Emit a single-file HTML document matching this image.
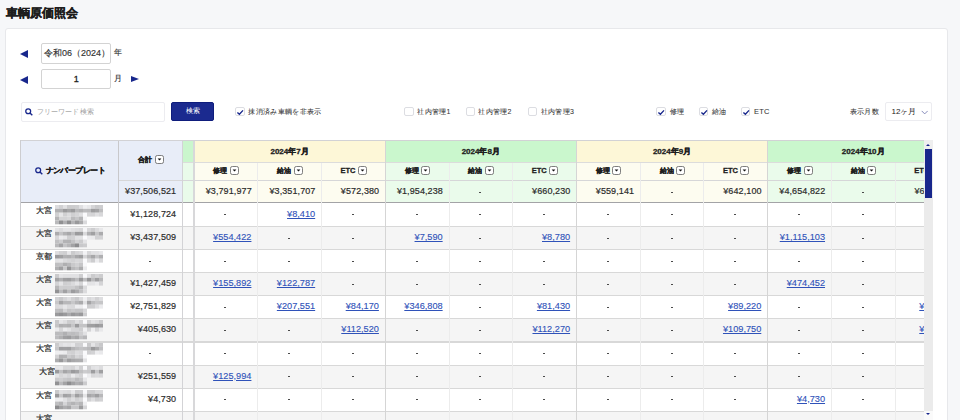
<!DOCTYPE html><html><head><meta charset="utf-8"><style>
*{box-sizing:border-box;margin:0;padding:0}
html,body{width:960px;height:420px;overflow:hidden;background:#f6f7f9;font-family:"Liberation Sans",sans-serif;color:#333}
.ab{position:absolute}
.t{position:absolute;white-space:nowrap;line-height:1}
.tri{position:absolute;width:0;height:0}
.cb{position:absolute;width:9.8px;height:9.4px;border:1px solid #dcdde2;border-radius:2px;background:#fff}
.cb svg{position:absolute;left:0;top:0}
.dd{position:absolute}
.num{position:absolute;white-space:nowrap;line-height:1;font-size:9px;letter-spacing:0.1px;-webkit-text-stroke:0.18px #2a2a2a;color:#2a2a2a}
.lnk{position:absolute;white-space:nowrap;line-height:1;font-size:9.2px;color:#2f52b9;-webkit-text-stroke:0.12px #2f52b9;text-decoration:underline;text-underline-offset:1px}
</style></head><body>
<div id="e1" class="t" style="left:5.50px;top:7.00px;font-size:12px;font-weight:bold;color:#1e1e1e;-webkit-text-stroke:0.35px #1e1e1e">車輌原価照会</div>
<div class="ab" style="left:5px;top:27.6px;width:943px;height:420px;background:#fff;border:1px solid #e7e8eb;border-radius:3px"></div>
<div class="tri" style="left:20.3px;top:49.6px;border-top:4.0px solid transparent;border-bottom:4.0px solid transparent;border-right:8.3px solid #18278c"></div>
<div class="tri" style="left:20.3px;top:76px;border-top:4.0px solid transparent;border-bottom:4.0px solid transparent;border-right:8.3px solid #18278c"></div>
<div class="tri" style="left:131px;top:75.7px;border-top:3.75px solid transparent;border-bottom:3.75px solid transparent;border-left:8px solid #18278c"></div>
<div class="ab" style="left:41px;top:43px;width:70px;height:20.5px;border:1px solid #d3d3d3;border-radius:2px;background:#fff"></div>
<div id="e2" class="t" style="left:44.00px;top:49.00px;font-size:9px;color:#333;-webkit-text-stroke:0.15px #333">令和06（2024）</div>
<div id="e3" class="t" style="left:113.60px;top:48.80px;font-size:8px;color:#333;-webkit-text-stroke:0.15px #333">年</div>
<div class="ab" style="left:41px;top:69.3px;width:70px;height:20px;border:1px solid #d3d3d3;border-radius:2px;background:#fff"></div>
<div id="e4" class="t" style="left:73.70px;top:75.00px;font-size:9px;color:#222;-webkit-text-stroke:0.3px #222">1</div>
<div id="e5" class="t" style="left:113.60px;top:75.30px;font-size:8px;color:#333;-webkit-text-stroke:0.15px #333">月</div>
<div class="ab" style="left:20.5px;top:101.5px;width:144px;height:20px;border:1px solid #ececf0;border-radius:2px;background:#fff"></div>
<svg class="ab" style="left:24.80px;top:107.80px" width="8" height="8" viewBox="0 0 8 8"><circle cx="3.2" cy="3.2" r="2.45" fill="none" stroke="#18278c" stroke-width="1.25"/><line x1="5" y1="5" x2="7.3" y2="7.3" stroke="#18278c" stroke-width="1.4"/></svg>
<div id="e6" class="t" style="left:37.00px;top:107.50px;font-size:7px;color:#a3a3a3;letter-spacing:0.1px">フリーワード検索</div>
<div class="ab" style="left:171px;top:101.8px;width:42.8px;height:19.7px;background:#1b2a8f;border:1px solid #0f1d7c;border-radius:2px"></div>
<div id="e7" class="t" style="left:186.40px;top:107.50px;font-size:6.5px;color:#fff">検索</div>
<div class="cb" style="left:235.4px;top:107.1px"><svg width="10" height="10" viewBox="0 0 10 10" style="left:-1px;top:-1px"><polyline points="2.4,5.4 4.4,7.3 8.0,3.4" fill="none" stroke="#18278c" stroke-width="1.35"/></svg></div>
<div id="e8" class="t" style="left:248.20px;top:107.50px;font-size:7px;color:#333;-webkit-text-stroke:0.05px #333;letter-spacing:0.35px">抹消済み車輌を非表示</div>
<div class="cb" style="left:403.9px;top:107.1px"></div>
<div id="e9" class="t" style="left:417.30px;top:107.50px;font-size:7px;color:#333;-webkit-text-stroke:0.05px #333;letter-spacing:0.3px">社内管理1</div>
<div class="cb" style="left:465.7px;top:107.1px"></div>
<div id="e10" class="t" style="left:478.40px;top:107.50px;font-size:7px;color:#333;-webkit-text-stroke:0.05px #333;letter-spacing:0.3px">社内管理2</div>
<div class="cb" style="left:527.5px;top:107.1px"></div>
<div id="e11" class="t" style="left:540.70px;top:107.50px;font-size:7px;color:#333;-webkit-text-stroke:0.05px #333;letter-spacing:0.3px">社内管理3</div>
<div class="cb" style="left:656.4px;top:107.1px"><svg width="10" height="10" viewBox="0 0 10 10" style="left:-1px;top:-1px"><polyline points="2.4,5.4 4.4,7.3 8.0,3.4" fill="none" stroke="#18278c" stroke-width="1.35"/></svg></div>
<div id="e12" class="t" style="left:670.00px;top:107.50px;font-size:7px;color:#333;-webkit-text-stroke:0.05px #333">修理</div>
<div class="cb" style="left:698.5px;top:107.1px"><svg width="10" height="10" viewBox="0 0 10 10" style="left:-1px;top:-1px"><polyline points="2.4,5.4 4.4,7.3 8.0,3.4" fill="none" stroke="#18278c" stroke-width="1.35"/></svg></div>
<div id="e13" class="t" style="left:711.70px;top:107.50px;font-size:7px;color:#333;-webkit-text-stroke:0.05px #333">給油</div>
<div class="cb" style="left:740.6px;top:107.1px"><svg width="10" height="10" viewBox="0 0 10 10" style="left:-1px;top:-1px"><polyline points="2.4,5.4 4.4,7.3 8.0,3.4" fill="none" stroke="#18278c" stroke-width="1.35"/></svg></div>
<div id="e14" class="t" style="left:754.00px;top:107.50px;font-size:7px;color:#333;-webkit-text-stroke:0.05px #333;font-size:7.5px;letter-spacing:0.2px">ETC</div>
<div id="e15" class="t" style="left:849.90px;top:107.50px;font-size:7px;color:#333;-webkit-text-stroke:0.05px #333;letter-spacing:0.3px">表示月数</div>
<div class="ab" style="left:885.4px;top:101.7px;width:47px;height:19.5px;border:1px solid #ececf0;border-radius:2px;background:#fff"></div>
<div id="e16" class="t" style="left:891.50px;top:107.50px;font-size:8px;color:#222">12ヶ月</div>
<svg class="ab" style="left:920.5px;top:110px" width="7.5" height="5" viewBox="0 0 7.5 5"><polyline points="0.7,0.9 3.7,3.9 6.7,0.9" fill="none" stroke="#7a80b4" stroke-width="0.9"/></svg>
<div class="ab" style="left:0;top:0;width:923.8px;height:420px;overflow:hidden">
<div class="ab" style="left:20.50px;top:139.50px;width:161.90px;height:63.80px;background:#e8edf8"></div>
<div class="ab" style="left:182.40px;top:141.00px;width:11.60px;height:21.80px;background:#caf6cd"></div>
<div class="ab" style="left:182.40px;top:162.80px;width:11.60px;height:39.40px;background:#e9fbea"></div>
<div class="ab" style="left:194.00px;top:141.00px;width:191.20px;height:21.80px;background:#fdf7d7"></div>
<div class="ab" style="left:194.00px;top:162.80px;width:191.20px;height:39.40px;background:#fdfcf0"></div>
<div class="ab" style="left:385.20px;top:141.00px;width:191.20px;height:21.80px;background:#caf7cd"></div>
<div class="ab" style="left:385.20px;top:162.80px;width:191.20px;height:39.40px;background:#eafbeb"></div>
<div class="ab" style="left:576.40px;top:141.00px;width:191.20px;height:21.80px;background:#fdf7d7"></div>
<div class="ab" style="left:576.40px;top:162.80px;width:191.20px;height:39.40px;background:#fdfcf0"></div>
<div class="ab" style="left:767.60px;top:141.00px;width:191.20px;height:21.80px;background:#caf7cd"></div>
<div class="ab" style="left:767.60px;top:162.80px;width:191.20px;height:39.40px;background:#eafbeb"></div>
<div class="ab" style="left:20.50px;top:203.30px;width:903.30px;height:23.12px;background:#ffffff"></div>
<div class="ab" style="left:20.50px;top:226.42px;width:903.30px;height:23.12px;background:#f5f5f5"></div>
<div class="ab" style="left:20.50px;top:249.54px;width:903.30px;height:23.12px;background:#ffffff"></div>
<div class="ab" style="left:20.50px;top:272.66px;width:903.30px;height:23.12px;background:#f5f5f5"></div>
<div class="ab" style="left:20.50px;top:295.78px;width:903.30px;height:23.12px;background:#ffffff"></div>
<div class="ab" style="left:20.50px;top:318.90px;width:903.30px;height:23.12px;background:#f5f5f5"></div>
<div class="ab" style="left:20.50px;top:342.02px;width:903.30px;height:23.12px;background:#ffffff"></div>
<div class="ab" style="left:20.50px;top:365.14px;width:903.30px;height:23.12px;background:#f5f5f5"></div>
<div class="ab" style="left:20.50px;top:388.26px;width:903.30px;height:23.12px;background:#ffffff"></div>
<div class="ab" style="left:20.50px;top:411.38px;width:903.30px;height:23.12px;background:#f5f5f5"></div>
<div class="ab" style="left:20.00px;top:139.50px;width:903.80px;height:1.40px;background:#d2d2d5"></div>
<div class="ab" style="left:20.00px;top:139.50px;width:1.30px;height:280.50px;background:#cdcdd0"></div>
<div class="ab" style="left:20.50px;top:202.20px;width:903.30px;height:1.30px;background:#a3a3a6"></div>
<div class="ab" style="left:182.40px;top:162.10px;width:741.40px;height:1.40px;background:#dcdcdc"></div>
<div class="ab" style="left:118.50px;top:179.80px;width:805.30px;height:1.20px;background:#d6d6d8"></div>
<div class="ab" style="left:20.50px;top:225.82px;width:903.30px;height:1.10px;background:#d8d8d8"></div>
<div class="ab" style="left:20.50px;top:248.94px;width:903.30px;height:1.10px;background:#d8d8d8"></div>
<div class="ab" style="left:20.50px;top:272.06px;width:903.30px;height:1.10px;background:#d8d8d8"></div>
<div class="ab" style="left:20.50px;top:295.18px;width:903.30px;height:1.10px;background:#d8d8d8"></div>
<div class="ab" style="left:20.50px;top:318.30px;width:903.30px;height:1.10px;background:#d8d8d8"></div>
<div class="ab" style="left:20.50px;top:341.42px;width:903.30px;height:1.10px;background:#d8d8d8"></div>
<div class="ab" style="left:20.50px;top:364.54px;width:903.30px;height:1.10px;background:#d8d8d8"></div>
<div class="ab" style="left:20.50px;top:387.66px;width:903.30px;height:1.10px;background:#d8d8d8"></div>
<div class="ab" style="left:20.50px;top:410.78px;width:903.30px;height:1.10px;background:#d8d8d8"></div>
<div class="ab" style="left:117.95px;top:141.00px;width:1.10px;height:279.00px;background:#c8c8cb"></div>
<div class="ab" style="left:181.85px;top:141.00px;width:1.10px;height:279.00px;background:#d3d3d6"></div>
<div class="ab" style="left:193.45px;top:141.00px;width:1.10px;height:279.00px;background:#d8d8da"></div>
<div class="ab" style="left:384.60px;top:141.00px;width:1.20px;height:279.00px;background:#d5d5d5"></div>
<div class="ab" style="left:575.80px;top:141.00px;width:1.20px;height:279.00px;background:#d5d5d5"></div>
<div class="ab" style="left:767.00px;top:141.00px;width:1.20px;height:279.00px;background:#d5d5d5"></div>
<div class="ab" style="left:958.20px;top:141.00px;width:1.20px;height:279.00px;background:#d5d5d5"></div>
<div class="ab" style="left:257.33px;top:162.80px;width:0.80px;height:257.20px;background:#ececec"></div>
<div class="ab" style="left:321.07px;top:162.80px;width:0.80px;height:257.20px;background:#ececec"></div>
<div class="ab" style="left:448.53px;top:162.80px;width:0.80px;height:257.20px;background:#ececec"></div>
<div class="ab" style="left:512.27px;top:162.80px;width:0.80px;height:257.20px;background:#ececec"></div>
<div class="ab" style="left:639.73px;top:162.80px;width:0.80px;height:257.20px;background:#ececec"></div>
<div class="ab" style="left:703.47px;top:162.80px;width:0.80px;height:257.20px;background:#ececec"></div>
<div class="ab" style="left:830.93px;top:162.80px;width:0.80px;height:257.20px;background:#ececec"></div>
<div class="ab" style="left:894.67px;top:162.80px;width:0.80px;height:257.20px;background:#ececec"></div>
<svg class="ab" style="left:34.50px;top:166.90px" width="8" height="8" viewBox="0 0 8 8"><circle cx="3.2" cy="3.2" r="2.45" fill="none" stroke="#18278c" stroke-width="1.25"/><line x1="5" y1="5" x2="7.3" y2="7.3" stroke="#18278c" stroke-width="1.4"/></svg>
<div id="e17" class="t" style="left:45.50px;top:166.50px;font-size:8px;letter-spacing:-0.55px;font-weight:bold;color:#1e1e1e;-webkit-text-stroke:0.3px #1e1e1e">ナンバープレート</div>
<div id="e18" class="t" style="left:137.90px;top:155.90px;font-size:7px;font-weight:bold;color:#1e1e1e;-webkit-text-stroke:0.3px #1e1e1e">合計</div>
<svg class="dd" style="left:155.00px;top:155.20px" width="9" height="9" viewBox="0 0 9 9"><rect x="0.5" y="0.5" width="8" height="8" rx="1.8" fill="#fff" stroke="#707070" stroke-width="0.9"/><polygon points="2.6,3.4 6.4,3.4 4.5,5.6" fill="#111"/></svg>
<div id="e19" class="num" style="right:747.60px;top:186.60px;">¥37,506,521</div>
<div id="e20" class="t" style="left:189.60px;width:200px;text-align:center;top:148.00px;font-size:8px;font-weight:bold;color:#1e1e1e;-webkit-text-stroke:0.3px #1e1e1e">2024年7月</div>
<div id="e21" class="num" style="right:672.07px;top:186.60px;">¥3,791,977</div>
<div id="e22" class="t" style="left:213.37px;top:166.70px;font-size:7px;font-weight:bold;color:#1e1e1e;-webkit-text-stroke:0.2px #1e1e1e">修理</div>
<svg class="dd" style="left:230.07px;top:166.30px" width="9" height="9" viewBox="0 0 9 9"><rect x="0.5" y="0.5" width="8" height="8" rx="1.8" fill="#fff" stroke="#707070" stroke-width="0.9"/><polygon points="2.6,3.4 6.4,3.4 4.5,5.6" fill="#111"/></svg>
<div id="e23" class="num" style="right:608.33px;top:186.60px;">¥3,351,707</div>
<div id="e24" class="t" style="left:277.10px;top:166.70px;font-size:7px;font-weight:bold;color:#1e1e1e;-webkit-text-stroke:0.2px #1e1e1e">給油</div>
<svg class="dd" style="left:293.80px;top:166.30px" width="9" height="9" viewBox="0 0 9 9"><rect x="0.5" y="0.5" width="8" height="8" rx="1.8" fill="#fff" stroke="#707070" stroke-width="0.9"/><polygon points="2.6,3.4 6.4,3.4 4.5,5.6" fill="#111"/></svg>
<div id="e25" class="num" style="right:544.60px;top:186.60px;">¥572,380</div>
<div id="e26" class="t" style="left:340.53px;top:166.80px;font-size:7.5px;font-weight:bold;color:#1e1e1e;-webkit-text-stroke:0.3px #1e1e1e">ETC</div>
<svg class="dd" style="left:357.53px;top:166.30px" width="9" height="9" viewBox="0 0 9 9"><rect x="0.5" y="0.5" width="8" height="8" rx="1.8" fill="#fff" stroke="#707070" stroke-width="0.9"/><polygon points="2.6,3.4 6.4,3.4 4.5,5.6" fill="#111"/></svg>
<div id="e27" class="t" style="left:380.80px;width:200px;text-align:center;top:148.00px;font-size:8px;font-weight:bold;color:#1e1e1e;-webkit-text-stroke:0.3px #1e1e1e">2024年8月</div>
<div id="e28" class="num" style="right:480.87px;top:186.60px;">¥1,954,238</div>
<div id="e29" class="t" style="left:404.57px;top:166.70px;font-size:7px;font-weight:bold;color:#1e1e1e;-webkit-text-stroke:0.2px #1e1e1e">修理</div>
<svg class="dd" style="left:421.27px;top:166.30px" width="9" height="9" viewBox="0 0 9 9"><rect x="0.5" y="0.5" width="8" height="8" rx="1.8" fill="#fff" stroke="#707070" stroke-width="0.9"/><polygon points="2.6,3.4 6.4,3.4 4.5,5.6" fill="#111"/></svg>
<div class="ab" style="left:478.70px;top:191.50px;width:2.60px;height:1.10px;background:#4a4a4a"></div>
<div id="e30" class="t" style="left:468.30px;top:166.70px;font-size:7px;font-weight:bold;color:#1e1e1e;-webkit-text-stroke:0.2px #1e1e1e">給油</div>
<svg class="dd" style="left:485.00px;top:166.30px" width="9" height="9" viewBox="0 0 9 9"><rect x="0.5" y="0.5" width="8" height="8" rx="1.8" fill="#fff" stroke="#707070" stroke-width="0.9"/><polygon points="2.6,3.4 6.4,3.4 4.5,5.6" fill="#111"/></svg>
<div id="e31" class="num" style="right:353.40px;top:186.60px;">¥660,230</div>
<div id="e32" class="t" style="left:531.73px;top:166.80px;font-size:7.5px;font-weight:bold;color:#1e1e1e;-webkit-text-stroke:0.3px #1e1e1e">ETC</div>
<svg class="dd" style="left:548.73px;top:166.30px" width="9" height="9" viewBox="0 0 9 9"><rect x="0.5" y="0.5" width="8" height="8" rx="1.8" fill="#fff" stroke="#707070" stroke-width="0.9"/><polygon points="2.6,3.4 6.4,3.4 4.5,5.6" fill="#111"/></svg>
<div id="e33" class="t" style="left:572.00px;width:200px;text-align:center;top:148.00px;font-size:8px;font-weight:bold;color:#1e1e1e;-webkit-text-stroke:0.3px #1e1e1e">2024年9月</div>
<div id="e34" class="num" style="right:289.67px;top:186.60px;">¥559,141</div>
<div id="e35" class="t" style="left:595.77px;top:166.70px;font-size:7px;font-weight:bold;color:#1e1e1e;-webkit-text-stroke:0.2px #1e1e1e">修理</div>
<svg class="dd" style="left:612.47px;top:166.30px" width="9" height="9" viewBox="0 0 9 9"><rect x="0.5" y="0.5" width="8" height="8" rx="1.8" fill="#fff" stroke="#707070" stroke-width="0.9"/><polygon points="2.6,3.4 6.4,3.4 4.5,5.6" fill="#111"/></svg>
<div class="ab" style="left:670.70px;top:191.50px;width:2.60px;height:1.10px;background:#4a4a4a"></div>
<div id="e36" class="t" style="left:659.50px;top:166.70px;font-size:7px;font-weight:bold;color:#1e1e1e;-webkit-text-stroke:0.2px #1e1e1e">給油</div>
<svg class="dd" style="left:676.20px;top:166.30px" width="9" height="9" viewBox="0 0 9 9"><rect x="0.5" y="0.5" width="8" height="8" rx="1.8" fill="#fff" stroke="#707070" stroke-width="0.9"/><polygon points="2.6,3.4 6.4,3.4 4.5,5.6" fill="#111"/></svg>
<div id="e37" class="num" style="right:162.20px;top:186.60px;">¥642,100</div>
<div id="e38" class="t" style="left:722.93px;top:166.80px;font-size:7.5px;font-weight:bold;color:#1e1e1e;-webkit-text-stroke:0.3px #1e1e1e">ETC</div>
<svg class="dd" style="left:739.93px;top:166.30px" width="9" height="9" viewBox="0 0 9 9"><rect x="0.5" y="0.5" width="8" height="8" rx="1.8" fill="#fff" stroke="#707070" stroke-width="0.9"/><polygon points="2.6,3.4 6.4,3.4 4.5,5.6" fill="#111"/></svg>
<div id="e39" class="t" style="left:763.20px;width:200px;text-align:center;top:148.00px;font-size:8px;font-weight:bold;color:#1e1e1e;-webkit-text-stroke:0.3px #1e1e1e">2024年10月</div>
<div id="e40" class="num" style="right:98.47px;top:186.60px;">¥4,654,822</div>
<div id="e41" class="t" style="left:786.97px;top:166.70px;font-size:7px;font-weight:bold;color:#1e1e1e;-webkit-text-stroke:0.2px #1e1e1e">修理</div>
<svg class="dd" style="left:803.67px;top:166.30px" width="9" height="9" viewBox="0 0 9 9"><rect x="0.5" y="0.5" width="8" height="8" rx="1.8" fill="#fff" stroke="#707070" stroke-width="0.9"/><polygon points="2.6,3.4 6.4,3.4 4.5,5.6" fill="#111"/></svg>
<div class="ab" style="left:861.70px;top:191.50px;width:2.60px;height:1.10px;background:#4a4a4a"></div>
<div id="e42" class="t" style="left:850.70px;top:166.70px;font-size:7px;font-weight:bold;color:#1e1e1e;-webkit-text-stroke:0.2px #1e1e1e">給油</div>
<svg class="dd" style="left:867.40px;top:166.30px" width="9" height="9" viewBox="0 0 9 9"><rect x="0.5" y="0.5" width="8" height="8" rx="1.8" fill="#fff" stroke="#707070" stroke-width="0.9"/><polygon points="2.6,3.4 6.4,3.4 4.5,5.6" fill="#111"/></svg>
<div id="e43" class="num" style="right:-29.00px;top:186.60px;">¥654,321</div>
<div id="e44" class="t" style="left:914.13px;top:166.80px;font-size:7.5px;font-weight:bold;color:#1e1e1e;-webkit-text-stroke:0.3px #1e1e1e">ETC</div>
<svg class="dd" style="left:931.13px;top:166.30px" width="9" height="9" viewBox="0 0 9 9"><rect x="0.5" y="0.5" width="8" height="8" rx="1.8" fill="#fff" stroke="#707070" stroke-width="0.9"/><polygon points="2.6,3.4 6.4,3.4 4.5,5.6" fill="#111"/></svg>
<div id="e45" class="t" style="left:35.70px;top:206.60px;font-size:8px;color:#262626;-webkit-text-stroke:0.2px #262626">大宮</div>
<svg class="ab" style="left:55.30px;top:204.60px" width="50" height="21" viewBox="0 0 50 21"><rect x="0" y="0.00" width="4" height="3.9" fill="rgb(220,220,222)"/><rect x="4" y="0.00" width="4" height="3.9" fill="rgb(209,209,211)"/><rect x="8" y="0.00" width="4" height="3.9" fill="rgb(225,225,227)"/><rect x="12" y="0.00" width="4" height="3.9" fill="rgb(203,203,205)"/><rect x="16" y="0.00" width="4" height="3.9" fill="rgb(204,204,206)"/><rect x="20" y="0.00" width="4" height="3.9" fill="rgb(206,206,208)"/><rect x="24" y="0.00" width="4" height="3.9" fill="rgb(223,223,225)"/><rect x="28" y="0.00" width="4" height="3.9" fill="rgb(238,238,240)"/><rect x="32" y="0.00" width="4" height="3.9" fill="rgb(232,232,234)"/><rect x="36" y="0.00" width="4" height="3.9" fill="rgb(213,213,215)"/><rect x="40" y="0.00" width="4" height="3.9" fill="rgb(202,202,204)"/><rect x="44" y="0.00" width="4" height="3.9" fill="rgb(205,205,207)"/><rect x="0" y="3.85" width="4" height="3.9" fill="rgb(177,177,179)"/><rect x="4" y="3.85" width="4" height="3.9" fill="rgb(176,176,178)"/><rect x="8" y="3.85" width="4" height="3.9" fill="rgb(154,154,156)"/><rect x="12" y="3.85" width="4" height="3.9" fill="rgb(165,165,167)"/><rect x="16" y="3.85" width="4" height="3.9" fill="rgb(155,155,157)"/><rect x="20" y="3.85" width="4" height="3.9" fill="rgb(185,185,187)"/><rect x="24" y="3.85" width="4" height="3.9" fill="rgb(177,177,179)"/><rect x="28" y="3.85" width="4" height="3.9" fill="rgb(188,188,190)"/><rect x="32" y="3.85" width="4" height="3.9" fill="rgb(186,186,188)"/><rect x="36" y="3.85" width="4" height="3.9" fill="rgb(157,157,159)"/><rect x="40" y="3.85" width="4" height="3.9" fill="rgb(164,164,166)"/><rect x="44" y="3.85" width="4" height="3.9" fill="rgb(190,190,192)"/><rect x="0" y="7.70" width="4" height="3.9" fill="rgb(208,208,210)"/><rect x="4" y="7.70" width="4" height="3.9" fill="rgb(230,230,232)"/><rect x="8" y="7.70" width="4" height="3.9" fill="rgb(208,208,210)"/><rect x="12" y="7.70" width="4" height="3.9" fill="rgb(219,219,221)"/><rect x="16" y="7.70" width="4" height="3.9" fill="rgb(207,207,209)"/><rect x="20" y="7.70" width="4" height="3.9" fill="rgb(213,213,215)"/><rect x="24" y="7.70" width="4" height="3.9" fill="rgb(223,223,225)"/><rect x="28" y="7.70" width="4" height="3.9" fill="rgb(250,250,252)"/><rect x="32" y="7.70" width="4" height="3.9" fill="rgb(214,214,216)"/><rect x="36" y="7.70" width="4" height="3.9" fill="rgb(212,212,214)"/><rect x="40" y="7.70" width="4" height="3.9" fill="rgb(224,224,226)"/><rect x="44" y="7.70" width="4" height="3.9" fill="rgb(216,216,218)"/><rect x="0" y="11.55" width="4" height="3.9" fill="rgb(181,181,183)"/><rect x="4" y="11.55" width="4" height="3.9" fill="rgb(212,212,214)"/><rect x="8" y="11.55" width="4" height="3.9" fill="rgb(211,211,213)"/><rect x="12" y="11.55" width="4" height="3.9" fill="rgb(215,215,217)"/><rect x="16" y="11.55" width="4" height="3.9" fill="rgb(187,187,189)"/><rect x="20" y="11.55" width="4" height="3.9" fill="rgb(198,198,200)"/><rect x="24" y="11.55" width="4" height="3.9" fill="rgb(181,181,183)"/><rect x="28" y="11.55" width="4" height="3.9" fill="rgb(245,245,247)"/><rect x="0" y="15.40" width="4" height="3.9" fill="rgb(185,185,187)"/><rect x="4" y="15.40" width="4" height="3.9" fill="rgb(144,144,146)"/><rect x="8" y="15.40" width="4" height="3.9" fill="rgb(176,176,178)"/><rect x="12" y="15.40" width="4" height="3.9" fill="rgb(143,143,145)"/><rect x="16" y="15.40" width="4" height="3.9" fill="rgb(179,179,181)"/><rect x="20" y="15.40" width="4" height="3.9" fill="rgb(153,153,155)"/><rect x="24" y="15.40" width="4" height="3.9" fill="rgb(171,171,173)"/><rect x="28" y="15.40" width="4" height="3.9" fill="rgb(218,218,220)"/></svg>
<div id="e46" class="num" style="right:747.60px;top:209.80px;">¥1,128,724</div>
<div class="ab" style="left:223.70px;top:213.50px;width:2.60px;height:1.10px;background:#4a4a4a"></div>
<div id="e47" class="lnk" style="right:608.63px;top:209.70px;">¥8,410</div>
<div class="ab" style="left:351.70px;top:213.50px;width:2.60px;height:1.10px;background:#4a4a4a"></div>
<div class="ab" style="left:415.70px;top:213.50px;width:2.60px;height:1.10px;background:#4a4a4a"></div>
<div class="ab" style="left:478.70px;top:213.50px;width:2.60px;height:1.10px;background:#4a4a4a"></div>
<div class="ab" style="left:542.70px;top:213.50px;width:2.60px;height:1.10px;background:#4a4a4a"></div>
<div class="ab" style="left:606.70px;top:213.50px;width:2.60px;height:1.10px;background:#4a4a4a"></div>
<div class="ab" style="left:670.70px;top:213.50px;width:2.60px;height:1.10px;background:#4a4a4a"></div>
<div class="ab" style="left:733.70px;top:213.50px;width:2.60px;height:1.10px;background:#4a4a4a"></div>
<div class="ab" style="left:797.70px;top:213.50px;width:2.60px;height:1.10px;background:#4a4a4a"></div>
<div class="ab" style="left:861.70px;top:213.50px;width:2.60px;height:1.10px;background:#4a4a4a"></div>
<div id="e48" class="t" style="left:35.70px;top:229.72px;font-size:8px;color:#262626;-webkit-text-stroke:0.2px #262626">大宮</div>
<svg class="ab" style="left:55.30px;top:227.72px" width="50" height="21" viewBox="0 0 50 21"><rect x="0" y="0.00" width="4" height="3.9" fill="rgb(227,227,229)"/><rect x="4" y="0.00" width="4" height="3.9" fill="rgb(220,220,222)"/><rect x="8" y="0.00" width="4" height="3.9" fill="rgb(229,229,231)"/><rect x="12" y="0.00" width="4" height="3.9" fill="rgb(229,229,231)"/><rect x="16" y="0.00" width="4" height="3.9" fill="rgb(223,223,225)"/><rect x="20" y="0.00" width="4" height="3.9" fill="rgb(219,219,221)"/><rect x="24" y="0.00" width="4" height="3.9" fill="rgb(215,215,217)"/><rect x="28" y="0.00" width="4" height="3.9" fill="rgb(246,246,248)"/><rect x="32" y="0.00" width="4" height="3.9" fill="rgb(215,215,217)"/><rect x="36" y="0.00" width="4" height="3.9" fill="rgb(205,205,207)"/><rect x="40" y="0.00" width="4" height="3.9" fill="rgb(219,219,221)"/><rect x="44" y="0.00" width="4" height="3.9" fill="rgb(231,231,233)"/><rect x="0" y="3.85" width="4" height="3.9" fill="rgb(171,171,173)"/><rect x="4" y="3.85" width="4" height="3.9" fill="rgb(196,196,198)"/><rect x="8" y="3.85" width="4" height="3.9" fill="rgb(178,178,180)"/><rect x="12" y="3.85" width="4" height="3.9" fill="rgb(168,168,170)"/><rect x="16" y="3.85" width="4" height="3.9" fill="rgb(188,188,190)"/><rect x="20" y="3.85" width="4" height="3.9" fill="rgb(154,154,156)"/><rect x="24" y="3.85" width="4" height="3.9" fill="rgb(157,157,159)"/><rect x="28" y="3.85" width="4" height="3.9" fill="rgb(217,217,219)"/><rect x="32" y="3.85" width="4" height="3.9" fill="rgb(176,176,178)"/><rect x="36" y="3.85" width="4" height="3.9" fill="rgb(160,160,162)"/><rect x="40" y="3.85" width="4" height="3.9" fill="rgb(198,198,200)"/><rect x="44" y="3.85" width="4" height="3.9" fill="rgb(171,171,173)"/><rect x="0" y="7.70" width="4" height="3.9" fill="rgb(214,214,216)"/><rect x="4" y="7.70" width="4" height="3.9" fill="rgb(236,236,238)"/><rect x="8" y="7.70" width="4" height="3.9" fill="rgb(231,231,233)"/><rect x="12" y="7.70" width="4" height="3.9" fill="rgb(207,207,209)"/><rect x="16" y="7.70" width="4" height="3.9" fill="rgb(209,209,211)"/><rect x="20" y="7.70" width="4" height="3.9" fill="rgb(225,225,227)"/><rect x="24" y="7.70" width="4" height="3.9" fill="rgb(226,226,228)"/><rect x="28" y="7.70" width="4" height="3.9" fill="rgb(250,250,252)"/><rect x="32" y="7.70" width="4" height="3.9" fill="rgb(236,236,238)"/><rect x="36" y="7.70" width="4" height="3.9" fill="rgb(234,234,236)"/><rect x="40" y="7.70" width="4" height="3.9" fill="rgb(209,209,211)"/><rect x="44" y="7.70" width="4" height="3.9" fill="rgb(210,210,212)"/><rect x="0" y="11.55" width="4" height="3.9" fill="rgb(192,192,194)"/><rect x="4" y="11.55" width="4" height="3.9" fill="rgb(205,205,207)"/><rect x="8" y="11.55" width="4" height="3.9" fill="rgb(179,179,181)"/><rect x="12" y="11.55" width="4" height="3.9" fill="rgb(178,178,180)"/><rect x="16" y="11.55" width="4" height="3.9" fill="rgb(194,194,196)"/><rect x="20" y="11.55" width="4" height="3.9" fill="rgb(211,211,213)"/><rect x="24" y="11.55" width="4" height="3.9" fill="rgb(203,203,205)"/><rect x="28" y="11.55" width="4" height="3.9" fill="rgb(228,228,230)"/><rect x="0" y="15.40" width="4" height="3.9" fill="rgb(185,185,187)"/><rect x="4" y="15.40" width="4" height="3.9" fill="rgb(164,164,166)"/><rect x="8" y="15.40" width="4" height="3.9" fill="rgb(196,196,198)"/><rect x="12" y="15.40" width="4" height="3.9" fill="rgb(182,182,184)"/><rect x="16" y="15.40" width="4" height="3.9" fill="rgb(162,162,164)"/><rect x="20" y="15.40" width="4" height="3.9" fill="rgb(141,141,143)"/><rect x="24" y="15.40" width="4" height="3.9" fill="rgb(200,200,202)"/><rect x="28" y="15.40" width="4" height="3.9" fill="rgb(204,204,206)"/></svg>
<div id="e49" class="num" style="right:747.60px;top:232.92px;">¥3,437,509</div>
<div id="e50" class="lnk" style="right:672.37px;top:232.82px;">¥554,422</div>
<div class="ab" style="left:287.70px;top:237.50px;width:2.60px;height:1.10px;background:#4a4a4a"></div>
<div class="ab" style="left:351.70px;top:237.50px;width:2.60px;height:1.10px;background:#4a4a4a"></div>
<div id="e51" class="lnk" style="right:481.17px;top:232.82px;">¥7,590</div>
<div class="ab" style="left:478.70px;top:237.50px;width:2.60px;height:1.10px;background:#4a4a4a"></div>
<div id="e52" class="lnk" style="right:353.70px;top:232.82px;">¥8,780</div>
<div class="ab" style="left:606.70px;top:237.50px;width:2.60px;height:1.10px;background:#4a4a4a"></div>
<div class="ab" style="left:670.70px;top:237.50px;width:2.60px;height:1.10px;background:#4a4a4a"></div>
<div class="ab" style="left:733.70px;top:237.50px;width:2.60px;height:1.10px;background:#4a4a4a"></div>
<div id="e53" class="lnk" style="right:98.77px;top:232.82px;">¥1,115,103</div>
<div class="ab" style="left:861.70px;top:237.50px;width:2.60px;height:1.10px;background:#4a4a4a"></div>
<div id="e54" class="t" style="left:35.70px;top:252.84px;font-size:8px;color:#262626;-webkit-text-stroke:0.2px #262626">京都</div>
<svg class="ab" style="left:55.30px;top:250.84px" width="50" height="21" viewBox="0 0 50 21"><rect x="0" y="0.00" width="4" height="3.9" fill="rgb(222,222,224)"/><rect x="4" y="0.00" width="4" height="3.9" fill="rgb(210,210,212)"/><rect x="8" y="0.00" width="4" height="3.9" fill="rgb(207,207,209)"/><rect x="12" y="0.00" width="4" height="3.9" fill="rgb(231,231,233)"/><rect x="16" y="0.00" width="4" height="3.9" fill="rgb(203,203,205)"/><rect x="20" y="0.00" width="4" height="3.9" fill="rgb(213,213,215)"/><rect x="24" y="0.00" width="4" height="3.9" fill="rgb(218,218,220)"/><rect x="28" y="0.00" width="4" height="3.9" fill="rgb(243,243,245)"/><rect x="32" y="0.00" width="4" height="3.9" fill="rgb(215,215,217)"/><rect x="36" y="0.00" width="4" height="3.9" fill="rgb(225,225,227)"/><rect x="40" y="0.00" width="4" height="3.9" fill="rgb(225,225,227)"/><rect x="44" y="0.00" width="4" height="3.9" fill="rgb(231,231,233)"/><rect x="0" y="3.85" width="4" height="3.9" fill="rgb(155,155,157)"/><rect x="4" y="3.85" width="4" height="3.9" fill="rgb(160,160,162)"/><rect x="8" y="3.85" width="4" height="3.9" fill="rgb(178,178,180)"/><rect x="12" y="3.85" width="4" height="3.9" fill="rgb(175,175,177)"/><rect x="16" y="3.85" width="4" height="3.9" fill="rgb(185,185,187)"/><rect x="20" y="3.85" width="4" height="3.9" fill="rgb(167,167,169)"/><rect x="24" y="3.85" width="4" height="3.9" fill="rgb(158,158,160)"/><rect x="28" y="3.85" width="4" height="3.9" fill="rgb(212,212,214)"/><rect x="32" y="3.85" width="4" height="3.9" fill="rgb(185,185,187)"/><rect x="36" y="3.85" width="4" height="3.9" fill="rgb(167,167,169)"/><rect x="40" y="3.85" width="4" height="3.9" fill="rgb(195,195,197)"/><rect x="44" y="3.85" width="4" height="3.9" fill="rgb(176,176,178)"/><rect x="0" y="7.70" width="4" height="3.9" fill="rgb(227,227,229)"/><rect x="4" y="7.70" width="4" height="3.9" fill="rgb(229,229,231)"/><rect x="8" y="7.70" width="4" height="3.9" fill="rgb(219,219,221)"/><rect x="12" y="7.70" width="4" height="3.9" fill="rgb(214,214,216)"/><rect x="16" y="7.70" width="4" height="3.9" fill="rgb(210,210,212)"/><rect x="20" y="7.70" width="4" height="3.9" fill="rgb(216,216,218)"/><rect x="24" y="7.70" width="4" height="3.9" fill="rgb(214,214,216)"/><rect x="28" y="7.70" width="4" height="3.9" fill="rgb(250,250,252)"/><rect x="32" y="7.70" width="4" height="3.9" fill="rgb(219,219,221)"/><rect x="36" y="7.70" width="4" height="3.9" fill="rgb(205,205,207)"/><rect x="40" y="7.70" width="4" height="3.9" fill="rgb(236,236,238)"/><rect x="44" y="7.70" width="4" height="3.9" fill="rgb(216,216,218)"/><rect x="0" y="11.55" width="4" height="3.9" fill="rgb(191,191,193)"/><rect x="4" y="11.55" width="4" height="3.9" fill="rgb(193,193,195)"/><rect x="8" y="11.55" width="4" height="3.9" fill="rgb(175,175,177)"/><rect x="12" y="11.55" width="4" height="3.9" fill="rgb(184,184,186)"/><rect x="16" y="11.55" width="4" height="3.9" fill="rgb(201,201,203)"/><rect x="20" y="11.55" width="4" height="3.9" fill="rgb(209,209,211)"/><rect x="24" y="11.55" width="4" height="3.9" fill="rgb(198,198,200)"/><rect x="28" y="11.55" width="4" height="3.9" fill="rgb(249,249,251)"/><rect x="0" y="15.40" width="4" height="3.9" fill="rgb(176,176,178)"/><rect x="4" y="15.40" width="4" height="3.9" fill="rgb(160,160,162)"/><rect x="8" y="15.40" width="4" height="3.9" fill="rgb(200,200,202)"/><rect x="12" y="15.40" width="4" height="3.9" fill="rgb(148,148,150)"/><rect x="16" y="15.40" width="4" height="3.9" fill="rgb(184,184,186)"/><rect x="20" y="15.40" width="4" height="3.9" fill="rgb(194,194,196)"/><rect x="24" y="15.40" width="4" height="3.9" fill="rgb(172,172,174)"/><rect x="28" y="15.40" width="4" height="3.9" fill="rgb(235,235,237)"/></svg>
<div class="ab" style="left:148.70px;top:260.50px;width:2.60px;height:1.10px;background:#4a4a4a"></div>
<div class="ab" style="left:223.70px;top:260.50px;width:2.60px;height:1.10px;background:#4a4a4a"></div>
<div class="ab" style="left:287.70px;top:260.50px;width:2.60px;height:1.10px;background:#4a4a4a"></div>
<div class="ab" style="left:351.70px;top:260.50px;width:2.60px;height:1.10px;background:#4a4a4a"></div>
<div class="ab" style="left:415.70px;top:260.50px;width:2.60px;height:1.10px;background:#4a4a4a"></div>
<div class="ab" style="left:478.70px;top:260.50px;width:2.60px;height:1.10px;background:#4a4a4a"></div>
<div class="ab" style="left:542.70px;top:260.50px;width:2.60px;height:1.10px;background:#4a4a4a"></div>
<div class="ab" style="left:606.70px;top:260.50px;width:2.60px;height:1.10px;background:#4a4a4a"></div>
<div class="ab" style="left:670.70px;top:260.50px;width:2.60px;height:1.10px;background:#4a4a4a"></div>
<div class="ab" style="left:733.70px;top:260.50px;width:2.60px;height:1.10px;background:#4a4a4a"></div>
<div class="ab" style="left:797.70px;top:260.50px;width:2.60px;height:1.10px;background:#4a4a4a"></div>
<div class="ab" style="left:861.70px;top:260.50px;width:2.60px;height:1.10px;background:#4a4a4a"></div>
<div id="e55" class="t" style="left:35.70px;top:275.96px;font-size:8px;color:#262626;-webkit-text-stroke:0.2px #262626">大宮</div>
<svg class="ab" style="left:55.30px;top:273.96px" width="50" height="21" viewBox="0 0 50 21"><rect x="0" y="0.00" width="4" height="3.9" fill="rgb(203,203,205)"/><rect x="4" y="0.00" width="4" height="3.9" fill="rgb(229,229,231)"/><rect x="8" y="0.00" width="4" height="3.9" fill="rgb(225,225,227)"/><rect x="12" y="0.00" width="4" height="3.9" fill="rgb(225,225,227)"/><rect x="16" y="0.00" width="4" height="3.9" fill="rgb(225,225,227)"/><rect x="20" y="0.00" width="4" height="3.9" fill="rgb(225,225,227)"/><rect x="24" y="0.00" width="4" height="3.9" fill="rgb(206,206,208)"/><rect x="28" y="0.00" width="4" height="3.9" fill="rgb(250,250,252)"/><rect x="32" y="0.00" width="4" height="3.9" fill="rgb(225,225,227)"/><rect x="36" y="0.00" width="4" height="3.9" fill="rgb(203,203,205)"/><rect x="40" y="0.00" width="4" height="3.9" fill="rgb(212,212,214)"/><rect x="44" y="0.00" width="4" height="3.9" fill="rgb(204,204,206)"/><rect x="0" y="3.85" width="4" height="3.9" fill="rgb(163,163,165)"/><rect x="4" y="3.85" width="4" height="3.9" fill="rgb(178,178,180)"/><rect x="8" y="3.85" width="4" height="3.9" fill="rgb(160,160,162)"/><rect x="12" y="3.85" width="4" height="3.9" fill="rgb(157,157,159)"/><rect x="16" y="3.85" width="4" height="3.9" fill="rgb(171,171,173)"/><rect x="20" y="3.85" width="4" height="3.9" fill="rgb(188,188,190)"/><rect x="24" y="3.85" width="4" height="3.9" fill="rgb(153,153,155)"/><rect x="28" y="3.85" width="4" height="3.9" fill="rgb(191,191,193)"/><rect x="32" y="3.85" width="4" height="3.9" fill="rgb(150,150,152)"/><rect x="36" y="3.85" width="4" height="3.9" fill="rgb(186,186,188)"/><rect x="40" y="3.85" width="4" height="3.9" fill="rgb(159,159,161)"/><rect x="44" y="3.85" width="4" height="3.9" fill="rgb(184,184,186)"/><rect x="0" y="7.70" width="4" height="3.9" fill="rgb(211,211,213)"/><rect x="4" y="7.70" width="4" height="3.9" fill="rgb(228,228,230)"/><rect x="8" y="7.70" width="4" height="3.9" fill="rgb(206,206,208)"/><rect x="12" y="7.70" width="4" height="3.9" fill="rgb(209,209,211)"/><rect x="16" y="7.70" width="4" height="3.9" fill="rgb(218,218,220)"/><rect x="20" y="7.70" width="4" height="3.9" fill="rgb(229,229,231)"/><rect x="24" y="7.70" width="4" height="3.9" fill="rgb(214,214,216)"/><rect x="28" y="7.70" width="4" height="3.9" fill="rgb(250,250,252)"/><rect x="32" y="7.70" width="4" height="3.9" fill="rgb(227,227,229)"/><rect x="36" y="7.70" width="4" height="3.9" fill="rgb(228,228,230)"/><rect x="40" y="7.70" width="4" height="3.9" fill="rgb(235,235,237)"/><rect x="44" y="7.70" width="4" height="3.9" fill="rgb(212,212,214)"/><rect x="0" y="11.55" width="4" height="3.9" fill="rgb(182,182,184)"/><rect x="4" y="11.55" width="4" height="3.9" fill="rgb(206,206,208)"/><rect x="8" y="11.55" width="4" height="3.9" fill="rgb(204,204,206)"/><rect x="12" y="11.55" width="4" height="3.9" fill="rgb(205,205,207)"/><rect x="16" y="11.55" width="4" height="3.9" fill="rgb(205,205,207)"/><rect x="20" y="11.55" width="4" height="3.9" fill="rgb(194,194,196)"/><rect x="24" y="11.55" width="4" height="3.9" fill="rgb(180,180,182)"/><rect x="28" y="11.55" width="4" height="3.9" fill="rgb(219,219,221)"/><rect x="0" y="15.40" width="4" height="3.9" fill="rgb(146,146,148)"/><rect x="4" y="15.40" width="4" height="3.9" fill="rgb(187,187,189)"/><rect x="8" y="15.40" width="4" height="3.9" fill="rgb(161,161,163)"/><rect x="12" y="15.40" width="4" height="3.9" fill="rgb(187,187,189)"/><rect x="16" y="15.40" width="4" height="3.9" fill="rgb(156,156,158)"/><rect x="20" y="15.40" width="4" height="3.9" fill="rgb(170,170,172)"/><rect x="24" y="15.40" width="4" height="3.9" fill="rgb(193,193,195)"/><rect x="28" y="15.40" width="4" height="3.9" fill="rgb(219,219,221)"/></svg>
<div id="e56" class="num" style="right:747.60px;top:279.16px;">¥1,427,459</div>
<div id="e57" class="lnk" style="right:672.37px;top:279.06px;">¥155,892</div>
<div id="e58" class="lnk" style="right:608.63px;top:279.06px;">¥122,787</div>
<div class="ab" style="left:351.70px;top:283.50px;width:2.60px;height:1.10px;background:#4a4a4a"></div>
<div class="ab" style="left:415.70px;top:283.50px;width:2.60px;height:1.10px;background:#4a4a4a"></div>
<div class="ab" style="left:478.70px;top:283.50px;width:2.60px;height:1.10px;background:#4a4a4a"></div>
<div class="ab" style="left:542.70px;top:283.50px;width:2.60px;height:1.10px;background:#4a4a4a"></div>
<div class="ab" style="left:606.70px;top:283.50px;width:2.60px;height:1.10px;background:#4a4a4a"></div>
<div class="ab" style="left:670.70px;top:283.50px;width:2.60px;height:1.10px;background:#4a4a4a"></div>
<div class="ab" style="left:733.70px;top:283.50px;width:2.60px;height:1.10px;background:#4a4a4a"></div>
<div id="e59" class="lnk" style="right:98.77px;top:279.06px;">¥474,452</div>
<div class="ab" style="left:861.70px;top:283.50px;width:2.60px;height:1.10px;background:#4a4a4a"></div>
<div id="e60" class="t" style="left:35.70px;top:299.08px;font-size:8px;color:#262626;-webkit-text-stroke:0.2px #262626">大宮</div>
<svg class="ab" style="left:55.30px;top:297.08px" width="50" height="21" viewBox="0 0 50 21"><rect x="0" y="0.00" width="4" height="3.9" fill="rgb(210,210,212)"/><rect x="4" y="0.00" width="4" height="3.9" fill="rgb(201,201,203)"/><rect x="8" y="0.00" width="4" height="3.9" fill="rgb(213,213,215)"/><rect x="12" y="0.00" width="4" height="3.9" fill="rgb(223,223,225)"/><rect x="16" y="0.00" width="4" height="3.9" fill="rgb(209,209,211)"/><rect x="20" y="0.00" width="4" height="3.9" fill="rgb(201,201,203)"/><rect x="24" y="0.00" width="4" height="3.9" fill="rgb(219,219,221)"/><rect x="28" y="0.00" width="4" height="3.9" fill="rgb(240,240,242)"/><rect x="32" y="0.00" width="4" height="3.9" fill="rgb(216,216,218)"/><rect x="36" y="0.00" width="4" height="3.9" fill="rgb(223,223,225)"/><rect x="40" y="0.00" width="4" height="3.9" fill="rgb(210,210,212)"/><rect x="44" y="0.00" width="4" height="3.9" fill="rgb(222,222,224)"/><rect x="0" y="3.85" width="4" height="3.9" fill="rgb(199,199,201)"/><rect x="4" y="3.85" width="4" height="3.9" fill="rgb(164,164,166)"/><rect x="8" y="3.85" width="4" height="3.9" fill="rgb(184,184,186)"/><rect x="12" y="3.85" width="4" height="3.9" fill="rgb(184,184,186)"/><rect x="16" y="3.85" width="4" height="3.9" fill="rgb(199,199,201)"/><rect x="20" y="3.85" width="4" height="3.9" fill="rgb(182,182,184)"/><rect x="24" y="3.85" width="4" height="3.9" fill="rgb(171,171,173)"/><rect x="28" y="3.85" width="4" height="3.9" fill="rgb(225,225,227)"/><rect x="32" y="3.85" width="4" height="3.9" fill="rgb(164,164,166)"/><rect x="36" y="3.85" width="4" height="3.9" fill="rgb(189,189,191)"/><rect x="40" y="3.85" width="4" height="3.9" fill="rgb(200,200,202)"/><rect x="44" y="3.85" width="4" height="3.9" fill="rgb(198,198,200)"/><rect x="0" y="7.70" width="4" height="3.9" fill="rgb(217,217,219)"/><rect x="4" y="7.70" width="4" height="3.9" fill="rgb(220,220,222)"/><rect x="8" y="7.70" width="4" height="3.9" fill="rgb(230,230,232)"/><rect x="12" y="7.70" width="4" height="3.9" fill="rgb(219,219,221)"/><rect x="16" y="7.70" width="4" height="3.9" fill="rgb(217,217,219)"/><rect x="20" y="7.70" width="4" height="3.9" fill="rgb(238,238,240)"/><rect x="24" y="7.70" width="4" height="3.9" fill="rgb(236,236,238)"/><rect x="28" y="7.70" width="4" height="3.9" fill="rgb(250,250,252)"/><rect x="32" y="7.70" width="4" height="3.9" fill="rgb(206,206,208)"/><rect x="36" y="7.70" width="4" height="3.9" fill="rgb(206,206,208)"/><rect x="40" y="7.70" width="4" height="3.9" fill="rgb(222,222,224)"/><rect x="44" y="7.70" width="4" height="3.9" fill="rgb(235,235,237)"/><rect x="0" y="11.55" width="4" height="3.9" fill="rgb(191,191,193)"/><rect x="4" y="11.55" width="4" height="3.9" fill="rgb(187,187,189)"/><rect x="8" y="11.55" width="4" height="3.9" fill="rgb(213,213,215)"/><rect x="12" y="11.55" width="4" height="3.9" fill="rgb(197,197,199)"/><rect x="16" y="11.55" width="4" height="3.9" fill="rgb(203,203,205)"/><rect x="20" y="11.55" width="4" height="3.9" fill="rgb(197,197,199)"/><rect x="24" y="11.55" width="4" height="3.9" fill="rgb(198,198,200)"/><rect x="28" y="11.55" width="4" height="3.9" fill="rgb(215,215,217)"/><rect x="0" y="15.40" width="4" height="3.9" fill="rgb(154,154,156)"/><rect x="4" y="15.40" width="4" height="3.9" fill="rgb(146,146,148)"/><rect x="8" y="15.40" width="4" height="3.9" fill="rgb(154,154,156)"/><rect x="12" y="15.40" width="4" height="3.9" fill="rgb(170,170,172)"/><rect x="16" y="15.40" width="4" height="3.9" fill="rgb(152,152,154)"/><rect x="20" y="15.40" width="4" height="3.9" fill="rgb(161,161,163)"/><rect x="24" y="15.40" width="4" height="3.9" fill="rgb(153,153,155)"/><rect x="28" y="15.40" width="4" height="3.9" fill="rgb(205,205,207)"/></svg>
<div id="e61" class="num" style="right:747.60px;top:302.28px;">¥2,751,829</div>
<div class="ab" style="left:223.70px;top:306.50px;width:2.60px;height:1.10px;background:#4a4a4a"></div>
<div id="e62" class="lnk" style="right:608.63px;top:302.18px;">¥207,551</div>
<div id="e63" class="lnk" style="right:544.90px;top:302.18px;">¥84,170</div>
<div id="e64" class="lnk" style="right:481.17px;top:302.18px;">¥346,808</div>
<div class="ab" style="left:478.70px;top:306.50px;width:2.60px;height:1.10px;background:#4a4a4a"></div>
<div id="e65" class="lnk" style="right:353.70px;top:302.18px;">¥81,430</div>
<div class="ab" style="left:606.70px;top:306.50px;width:2.60px;height:1.10px;background:#4a4a4a"></div>
<div class="ab" style="left:670.70px;top:306.50px;width:2.60px;height:1.10px;background:#4a4a4a"></div>
<div id="e66" class="lnk" style="right:162.50px;top:302.18px;">¥89,220</div>
<div class="ab" style="left:797.70px;top:306.50px;width:2.60px;height:1.10px;background:#4a4a4a"></div>
<div class="ab" style="left:861.70px;top:306.50px;width:2.60px;height:1.10px;background:#4a4a4a"></div>
<div id="e67" class="lnk" style="right:-28.70px;top:302.18px;">¥12,345</div>
<div id="e68" class="t" style="left:35.70px;top:322.20px;font-size:8px;color:#262626;-webkit-text-stroke:0.2px #262626">大宮</div>
<svg class="ab" style="left:55.30px;top:320.20px" width="50" height="21" viewBox="0 0 50 21"><rect x="0" y="0.00" width="4" height="3.9" fill="rgb(200,200,202)"/><rect x="4" y="0.00" width="4" height="3.9" fill="rgb(230,230,232)"/><rect x="8" y="0.00" width="4" height="3.9" fill="rgb(222,222,224)"/><rect x="12" y="0.00" width="4" height="3.9" fill="rgb(205,205,207)"/><rect x="16" y="0.00" width="4" height="3.9" fill="rgb(207,207,209)"/><rect x="20" y="0.00" width="4" height="3.9" fill="rgb(224,224,226)"/><rect x="24" y="0.00" width="4" height="3.9" fill="rgb(212,212,214)"/><rect x="28" y="0.00" width="4" height="3.9" fill="rgb(250,250,252)"/><rect x="32" y="0.00" width="4" height="3.9" fill="rgb(211,211,213)"/><rect x="36" y="0.00" width="4" height="3.9" fill="rgb(227,227,229)"/><rect x="40" y="0.00" width="4" height="3.9" fill="rgb(221,221,223)"/><rect x="44" y="0.00" width="4" height="3.9" fill="rgb(205,205,207)"/><rect x="0" y="3.85" width="4" height="3.9" fill="rgb(196,196,198)"/><rect x="4" y="3.85" width="4" height="3.9" fill="rgb(175,175,177)"/><rect x="8" y="3.85" width="4" height="3.9" fill="rgb(179,179,181)"/><rect x="12" y="3.85" width="4" height="3.9" fill="rgb(175,175,177)"/><rect x="16" y="3.85" width="4" height="3.9" fill="rgb(197,197,199)"/><rect x="20" y="3.85" width="4" height="3.9" fill="rgb(155,155,157)"/><rect x="24" y="3.85" width="4" height="3.9" fill="rgb(196,196,198)"/><rect x="28" y="3.85" width="4" height="3.9" fill="rgb(195,195,197)"/><rect x="32" y="3.85" width="4" height="3.9" fill="rgb(160,160,162)"/><rect x="36" y="3.85" width="4" height="3.9" fill="rgb(158,158,160)"/><rect x="40" y="3.85" width="4" height="3.9" fill="rgb(151,151,153)"/><rect x="44" y="3.85" width="4" height="3.9" fill="rgb(159,159,161)"/><rect x="0" y="7.70" width="4" height="3.9" fill="rgb(234,234,236)"/><rect x="4" y="7.70" width="4" height="3.9" fill="rgb(214,214,216)"/><rect x="8" y="7.70" width="4" height="3.9" fill="rgb(235,235,237)"/><rect x="12" y="7.70" width="4" height="3.9" fill="rgb(227,227,229)"/><rect x="16" y="7.70" width="4" height="3.9" fill="rgb(214,214,216)"/><rect x="20" y="7.70" width="4" height="3.9" fill="rgb(213,213,215)"/><rect x="24" y="7.70" width="4" height="3.9" fill="rgb(206,206,208)"/><rect x="28" y="7.70" width="4" height="3.9" fill="rgb(240,240,242)"/><rect x="32" y="7.70" width="4" height="3.9" fill="rgb(211,211,213)"/><rect x="36" y="7.70" width="4" height="3.9" fill="rgb(238,238,240)"/><rect x="40" y="7.70" width="4" height="3.9" fill="rgb(213,213,215)"/><rect x="44" y="7.70" width="4" height="3.9" fill="rgb(232,232,234)"/><rect x="0" y="11.55" width="4" height="3.9" fill="rgb(187,187,189)"/><rect x="4" y="11.55" width="4" height="3.9" fill="rgb(188,188,190)"/><rect x="8" y="11.55" width="4" height="3.9" fill="rgb(176,176,178)"/><rect x="12" y="11.55" width="4" height="3.9" fill="rgb(191,191,193)"/><rect x="16" y="11.55" width="4" height="3.9" fill="rgb(188,188,190)"/><rect x="20" y="11.55" width="4" height="3.9" fill="rgb(193,193,195)"/><rect x="24" y="11.55" width="4" height="3.9" fill="rgb(207,207,209)"/><rect x="28" y="11.55" width="4" height="3.9" fill="rgb(225,225,227)"/><rect x="0" y="15.40" width="4" height="3.9" fill="rgb(188,188,190)"/><rect x="4" y="15.40" width="4" height="3.9" fill="rgb(177,177,179)"/><rect x="8" y="15.40" width="4" height="3.9" fill="rgb(160,160,162)"/><rect x="12" y="15.40" width="4" height="3.9" fill="rgb(156,156,158)"/><rect x="16" y="15.40" width="4" height="3.9" fill="rgb(174,174,176)"/><rect x="20" y="15.40" width="4" height="3.9" fill="rgb(166,166,168)"/><rect x="24" y="15.40" width="4" height="3.9" fill="rgb(193,193,195)"/><rect x="28" y="15.40" width="4" height="3.9" fill="rgb(183,183,185)"/></svg>
<div id="e69" class="num" style="right:747.60px;top:325.40px;">¥405,630</div>
<div class="ab" style="left:223.70px;top:329.50px;width:2.60px;height:1.10px;background:#4a4a4a"></div>
<div class="ab" style="left:287.70px;top:329.50px;width:2.60px;height:1.10px;background:#4a4a4a"></div>
<div id="e70" class="lnk" style="right:544.90px;top:325.30px;">¥112,520</div>
<div class="ab" style="left:415.70px;top:329.50px;width:2.60px;height:1.10px;background:#4a4a4a"></div>
<div class="ab" style="left:478.70px;top:329.50px;width:2.60px;height:1.10px;background:#4a4a4a"></div>
<div id="e71" class="lnk" style="right:353.70px;top:325.30px;">¥112,270</div>
<div class="ab" style="left:606.70px;top:329.50px;width:2.60px;height:1.10px;background:#4a4a4a"></div>
<div class="ab" style="left:670.70px;top:329.50px;width:2.60px;height:1.10px;background:#4a4a4a"></div>
<div id="e72" class="lnk" style="right:162.50px;top:325.30px;">¥109,750</div>
<div class="ab" style="left:797.70px;top:329.50px;width:2.60px;height:1.10px;background:#4a4a4a"></div>
<div class="ab" style="left:861.70px;top:329.50px;width:2.60px;height:1.10px;background:#4a4a4a"></div>
<div id="e73" class="lnk" style="right:-28.70px;top:325.30px;">¥12,345</div>
<div id="e74" class="t" style="left:35.70px;top:345.32px;font-size:8px;color:#262626;-webkit-text-stroke:0.2px #262626">大宮</div>
<svg class="ab" style="left:55.30px;top:343.32px" width="50" height="21" viewBox="0 0 50 21"><rect x="0" y="0.00" width="4" height="3.9" fill="rgb(203,203,205)"/><rect x="4" y="0.00" width="4" height="3.9" fill="rgb(222,222,224)"/><rect x="8" y="0.00" width="4" height="3.9" fill="rgb(229,229,231)"/><rect x="12" y="0.00" width="4" height="3.9" fill="rgb(226,226,228)"/><rect x="16" y="0.00" width="4" height="3.9" fill="rgb(232,232,234)"/><rect x="20" y="0.00" width="4" height="3.9" fill="rgb(208,208,210)"/><rect x="24" y="0.00" width="4" height="3.9" fill="rgb(209,209,211)"/><rect x="28" y="0.00" width="4" height="3.9" fill="rgb(250,250,252)"/><rect x="32" y="0.00" width="4" height="3.9" fill="rgb(201,201,203)"/><rect x="36" y="0.00" width="4" height="3.9" fill="rgb(228,228,230)"/><rect x="40" y="0.00" width="4" height="3.9" fill="rgb(211,211,213)"/><rect x="44" y="0.00" width="4" height="3.9" fill="rgb(200,200,202)"/><rect x="0" y="3.85" width="4" height="3.9" fill="rgb(199,199,201)"/><rect x="4" y="3.85" width="4" height="3.9" fill="rgb(159,159,161)"/><rect x="8" y="3.85" width="4" height="3.9" fill="rgb(161,161,163)"/><rect x="12" y="3.85" width="4" height="3.9" fill="rgb(159,159,161)"/><rect x="16" y="3.85" width="4" height="3.9" fill="rgb(180,180,182)"/><rect x="20" y="3.85" width="4" height="3.9" fill="rgb(189,189,191)"/><rect x="24" y="3.85" width="4" height="3.9" fill="rgb(196,196,198)"/><rect x="28" y="3.85" width="4" height="3.9" fill="rgb(192,192,194)"/><rect x="32" y="3.85" width="4" height="3.9" fill="rgb(185,185,187)"/><rect x="36" y="3.85" width="4" height="3.9" fill="rgb(153,153,155)"/><rect x="40" y="3.85" width="4" height="3.9" fill="rgb(170,170,172)"/><rect x="44" y="3.85" width="4" height="3.9" fill="rgb(193,193,195)"/><rect x="0" y="7.70" width="4" height="3.9" fill="rgb(238,238,240)"/><rect x="4" y="7.70" width="4" height="3.9" fill="rgb(238,238,240)"/><rect x="8" y="7.70" width="4" height="3.9" fill="rgb(235,235,237)"/><rect x="12" y="7.70" width="4" height="3.9" fill="rgb(211,211,213)"/><rect x="16" y="7.70" width="4" height="3.9" fill="rgb(208,208,210)"/><rect x="20" y="7.70" width="4" height="3.9" fill="rgb(220,220,222)"/><rect x="24" y="7.70" width="4" height="3.9" fill="rgb(217,217,219)"/><rect x="28" y="7.70" width="4" height="3.9" fill="rgb(250,250,252)"/><rect x="32" y="7.70" width="4" height="3.9" fill="rgb(207,207,209)"/><rect x="36" y="7.70" width="4" height="3.9" fill="rgb(211,211,213)"/><rect x="40" y="7.70" width="4" height="3.9" fill="rgb(237,237,239)"/><rect x="44" y="7.70" width="4" height="3.9" fill="rgb(233,233,235)"/><rect x="0" y="11.55" width="4" height="3.9" fill="rgb(210,210,212)"/><rect x="4" y="11.55" width="4" height="3.9" fill="rgb(176,176,178)"/><rect x="8" y="11.55" width="4" height="3.9" fill="rgb(179,179,181)"/><rect x="12" y="11.55" width="4" height="3.9" fill="rgb(203,203,205)"/><rect x="16" y="11.55" width="4" height="3.9" fill="rgb(195,195,197)"/><rect x="20" y="11.55" width="4" height="3.9" fill="rgb(214,214,216)"/><rect x="24" y="11.55" width="4" height="3.9" fill="rgb(207,207,209)"/><rect x="28" y="11.55" width="4" height="3.9" fill="rgb(248,248,250)"/><rect x="0" y="15.40" width="4" height="3.9" fill="rgb(172,172,174)"/><rect x="4" y="15.40" width="4" height="3.9" fill="rgb(152,152,154)"/><rect x="8" y="15.40" width="4" height="3.9" fill="rgb(184,184,186)"/><rect x="12" y="15.40" width="4" height="3.9" fill="rgb(157,157,159)"/><rect x="16" y="15.40" width="4" height="3.9" fill="rgb(168,168,170)"/><rect x="20" y="15.40" width="4" height="3.9" fill="rgb(172,172,174)"/><rect x="24" y="15.40" width="4" height="3.9" fill="rgb(174,174,176)"/><rect x="28" y="15.40" width="4" height="3.9" fill="rgb(226,226,228)"/></svg>
<div class="ab" style="left:148.70px;top:352.50px;width:2.60px;height:1.10px;background:#4a4a4a"></div>
<div class="ab" style="left:223.70px;top:352.50px;width:2.60px;height:1.10px;background:#4a4a4a"></div>
<div class="ab" style="left:287.70px;top:352.50px;width:2.60px;height:1.10px;background:#4a4a4a"></div>
<div class="ab" style="left:351.70px;top:352.50px;width:2.60px;height:1.10px;background:#4a4a4a"></div>
<div class="ab" style="left:415.70px;top:352.50px;width:2.60px;height:1.10px;background:#4a4a4a"></div>
<div class="ab" style="left:478.70px;top:352.50px;width:2.60px;height:1.10px;background:#4a4a4a"></div>
<div class="ab" style="left:542.70px;top:352.50px;width:2.60px;height:1.10px;background:#4a4a4a"></div>
<div class="ab" style="left:606.70px;top:352.50px;width:2.60px;height:1.10px;background:#4a4a4a"></div>
<div class="ab" style="left:670.70px;top:352.50px;width:2.60px;height:1.10px;background:#4a4a4a"></div>
<div class="ab" style="left:733.70px;top:352.50px;width:2.60px;height:1.10px;background:#4a4a4a"></div>
<div class="ab" style="left:797.70px;top:352.50px;width:2.60px;height:1.10px;background:#4a4a4a"></div>
<div class="ab" style="left:861.70px;top:352.50px;width:2.60px;height:1.10px;background:#4a4a4a"></div>
<div id="e75" class="t" style="left:38.50px;top:368.44px;font-size:8px;color:#262626;-webkit-text-stroke:0.2px #262626">大宮</div>
<svg class="ab" style="left:55.30px;top:366.44px" width="50" height="21" viewBox="0 0 50 21"><rect x="0" y="0.00" width="4" height="3.9" fill="rgb(230,230,232)"/><rect x="4" y="0.00" width="4" height="3.9" fill="rgb(232,232,234)"/><rect x="8" y="0.00" width="4" height="3.9" fill="rgb(215,215,217)"/><rect x="12" y="0.00" width="4" height="3.9" fill="rgb(216,216,218)"/><rect x="16" y="0.00" width="4" height="3.9" fill="rgb(212,212,214)"/><rect x="20" y="0.00" width="4" height="3.9" fill="rgb(228,228,230)"/><rect x="24" y="0.00" width="4" height="3.9" fill="rgb(208,208,210)"/><rect x="28" y="0.00" width="4" height="3.9" fill="rgb(250,250,252)"/><rect x="32" y="0.00" width="4" height="3.9" fill="rgb(207,207,209)"/><rect x="36" y="0.00" width="4" height="3.9" fill="rgb(225,225,227)"/><rect x="40" y="0.00" width="4" height="3.9" fill="rgb(228,228,230)"/><rect x="44" y="0.00" width="4" height="3.9" fill="rgb(220,220,222)"/><rect x="0" y="3.85" width="4" height="3.9" fill="rgb(154,154,156)"/><rect x="4" y="3.85" width="4" height="3.9" fill="rgb(192,192,194)"/><rect x="8" y="3.85" width="4" height="3.9" fill="rgb(165,165,167)"/><rect x="12" y="3.85" width="4" height="3.9" fill="rgb(177,177,179)"/><rect x="16" y="3.85" width="4" height="3.9" fill="rgb(154,154,156)"/><rect x="20" y="3.85" width="4" height="3.9" fill="rgb(163,163,165)"/><rect x="24" y="3.85" width="4" height="3.9" fill="rgb(192,192,194)"/><rect x="28" y="3.85" width="4" height="3.9" fill="rgb(204,204,206)"/><rect x="32" y="3.85" width="4" height="3.9" fill="rgb(200,200,202)"/><rect x="36" y="3.85" width="4" height="3.9" fill="rgb(157,157,159)"/><rect x="40" y="3.85" width="4" height="3.9" fill="rgb(199,199,201)"/><rect x="44" y="3.85" width="4" height="3.9" fill="rgb(159,159,161)"/><rect x="0" y="7.70" width="4" height="3.9" fill="rgb(228,228,230)"/><rect x="4" y="7.70" width="4" height="3.9" fill="rgb(214,214,216)"/><rect x="8" y="7.70" width="4" height="3.9" fill="rgb(221,221,223)"/><rect x="12" y="7.70" width="4" height="3.9" fill="rgb(213,213,215)"/><rect x="16" y="7.70" width="4" height="3.9" fill="rgb(234,234,236)"/><rect x="20" y="7.70" width="4" height="3.9" fill="rgb(219,219,221)"/><rect x="24" y="7.70" width="4" height="3.9" fill="rgb(211,211,213)"/><rect x="28" y="7.70" width="4" height="3.9" fill="rgb(250,250,252)"/><rect x="32" y="7.70" width="4" height="3.9" fill="rgb(236,236,238)"/><rect x="36" y="7.70" width="4" height="3.9" fill="rgb(215,215,217)"/><rect x="40" y="7.70" width="4" height="3.9" fill="rgb(219,219,221)"/><rect x="44" y="7.70" width="4" height="3.9" fill="rgb(215,215,217)"/><rect x="0" y="11.55" width="4" height="3.9" fill="rgb(202,202,204)"/><rect x="4" y="11.55" width="4" height="3.9" fill="rgb(207,207,209)"/><rect x="8" y="11.55" width="4" height="3.9" fill="rgb(200,200,202)"/><rect x="12" y="11.55" width="4" height="3.9" fill="rgb(196,196,198)"/><rect x="16" y="11.55" width="4" height="3.9" fill="rgb(201,201,203)"/><rect x="20" y="11.55" width="4" height="3.9" fill="rgb(187,187,189)"/><rect x="24" y="11.55" width="4" height="3.9" fill="rgb(197,197,199)"/><rect x="28" y="11.55" width="4" height="3.9" fill="rgb(230,230,232)"/><rect x="0" y="15.40" width="4" height="3.9" fill="rgb(145,145,147)"/><rect x="4" y="15.40" width="4" height="3.9" fill="rgb(186,186,188)"/><rect x="8" y="15.40" width="4" height="3.9" fill="rgb(163,163,165)"/><rect x="12" y="15.40" width="4" height="3.9" fill="rgb(141,141,143)"/><rect x="16" y="15.40" width="4" height="3.9" fill="rgb(161,161,163)"/><rect x="20" y="15.40" width="4" height="3.9" fill="rgb(175,175,177)"/><rect x="24" y="15.40" width="4" height="3.9" fill="rgb(169,169,171)"/><rect x="28" y="15.40" width="4" height="3.9" fill="rgb(203,203,205)"/></svg>
<div id="e76" class="num" style="right:747.60px;top:371.64px;">¥251,559</div>
<div id="e77" class="lnk" style="right:672.37px;top:371.54px;">¥125,994</div>
<div class="ab" style="left:287.70px;top:375.50px;width:2.60px;height:1.10px;background:#4a4a4a"></div>
<div class="ab" style="left:351.70px;top:375.50px;width:2.60px;height:1.10px;background:#4a4a4a"></div>
<div class="ab" style="left:415.70px;top:375.50px;width:2.60px;height:1.10px;background:#4a4a4a"></div>
<div class="ab" style="left:478.70px;top:375.50px;width:2.60px;height:1.10px;background:#4a4a4a"></div>
<div class="ab" style="left:542.70px;top:375.50px;width:2.60px;height:1.10px;background:#4a4a4a"></div>
<div class="ab" style="left:606.70px;top:375.50px;width:2.60px;height:1.10px;background:#4a4a4a"></div>
<div class="ab" style="left:670.70px;top:375.50px;width:2.60px;height:1.10px;background:#4a4a4a"></div>
<div class="ab" style="left:733.70px;top:375.50px;width:2.60px;height:1.10px;background:#4a4a4a"></div>
<div class="ab" style="left:797.70px;top:375.50px;width:2.60px;height:1.10px;background:#4a4a4a"></div>
<div class="ab" style="left:861.70px;top:375.50px;width:2.60px;height:1.10px;background:#4a4a4a"></div>
<div id="e78" class="t" style="left:35.70px;top:391.56px;font-size:8px;color:#262626;-webkit-text-stroke:0.2px #262626">大宮</div>
<svg class="ab" style="left:55.30px;top:389.56px" width="50" height="21" viewBox="0 0 50 21"><rect x="0" y="0.00" width="4" height="3.9" fill="rgb(201,201,203)"/><rect x="4" y="0.00" width="4" height="3.9" fill="rgb(224,224,226)"/><rect x="8" y="0.00" width="4" height="3.9" fill="rgb(221,221,223)"/><rect x="12" y="0.00" width="4" height="3.9" fill="rgb(218,218,220)"/><rect x="16" y="0.00" width="4" height="3.9" fill="rgb(232,232,234)"/><rect x="20" y="0.00" width="4" height="3.9" fill="rgb(204,204,206)"/><rect x="24" y="0.00" width="4" height="3.9" fill="rgb(207,207,209)"/><rect x="28" y="0.00" width="4" height="3.9" fill="rgb(249,249,251)"/><rect x="32" y="0.00" width="4" height="3.9" fill="rgb(206,206,208)"/><rect x="36" y="0.00" width="4" height="3.9" fill="rgb(205,205,207)"/><rect x="40" y="0.00" width="4" height="3.9" fill="rgb(216,216,218)"/><rect x="44" y="0.00" width="4" height="3.9" fill="rgb(217,217,219)"/><rect x="0" y="3.85" width="4" height="3.9" fill="rgb(152,152,154)"/><rect x="4" y="3.85" width="4" height="3.9" fill="rgb(199,199,201)"/><rect x="8" y="3.85" width="4" height="3.9" fill="rgb(161,161,163)"/><rect x="12" y="3.85" width="4" height="3.9" fill="rgb(167,167,169)"/><rect x="16" y="3.85" width="4" height="3.9" fill="rgb(198,198,200)"/><rect x="20" y="3.85" width="4" height="3.9" fill="rgb(158,158,160)"/><rect x="24" y="3.85" width="4" height="3.9" fill="rgb(177,177,179)"/><rect x="28" y="3.85" width="4" height="3.9" fill="rgb(228,228,230)"/><rect x="32" y="3.85" width="4" height="3.9" fill="rgb(166,166,168)"/><rect x="36" y="3.85" width="4" height="3.9" fill="rgb(175,175,177)"/><rect x="40" y="3.85" width="4" height="3.9" fill="rgb(159,159,161)"/><rect x="44" y="3.85" width="4" height="3.9" fill="rgb(184,184,186)"/><rect x="0" y="7.70" width="4" height="3.9" fill="rgb(237,237,239)"/><rect x="4" y="7.70" width="4" height="3.9" fill="rgb(236,236,238)"/><rect x="8" y="7.70" width="4" height="3.9" fill="rgb(225,225,227)"/><rect x="12" y="7.70" width="4" height="3.9" fill="rgb(210,210,212)"/><rect x="16" y="7.70" width="4" height="3.9" fill="rgb(222,222,224)"/><rect x="20" y="7.70" width="4" height="3.9" fill="rgb(208,208,210)"/><rect x="24" y="7.70" width="4" height="3.9" fill="rgb(216,216,218)"/><rect x="28" y="7.70" width="4" height="3.9" fill="rgb(250,250,252)"/><rect x="32" y="7.70" width="4" height="3.9" fill="rgb(209,209,211)"/><rect x="36" y="7.70" width="4" height="3.9" fill="rgb(222,222,224)"/><rect x="40" y="7.70" width="4" height="3.9" fill="rgb(206,206,208)"/><rect x="44" y="7.70" width="4" height="3.9" fill="rgb(210,210,212)"/><rect x="0" y="11.55" width="4" height="3.9" fill="rgb(191,191,193)"/><rect x="4" y="11.55" width="4" height="3.9" fill="rgb(180,180,182)"/><rect x="8" y="11.55" width="4" height="3.9" fill="rgb(213,213,215)"/><rect x="12" y="11.55" width="4" height="3.9" fill="rgb(189,189,191)"/><rect x="16" y="11.55" width="4" height="3.9" fill="rgb(179,179,181)"/><rect x="20" y="11.55" width="4" height="3.9" fill="rgb(191,191,193)"/><rect x="24" y="11.55" width="4" height="3.9" fill="rgb(182,182,184)"/><rect x="28" y="11.55" width="4" height="3.9" fill="rgb(239,239,241)"/><rect x="0" y="15.40" width="4" height="3.9" fill="rgb(140,140,142)"/><rect x="4" y="15.40" width="4" height="3.9" fill="rgb(161,161,163)"/><rect x="8" y="15.40" width="4" height="3.9" fill="rgb(175,175,177)"/><rect x="12" y="15.40" width="4" height="3.9" fill="rgb(166,166,168)"/><rect x="16" y="15.40" width="4" height="3.9" fill="rgb(199,199,201)"/><rect x="20" y="15.40" width="4" height="3.9" fill="rgb(198,198,200)"/><rect x="24" y="15.40" width="4" height="3.9" fill="rgb(157,157,159)"/><rect x="28" y="15.40" width="4" height="3.9" fill="rgb(214,214,216)"/></svg>
<div id="e79" class="num" style="right:747.60px;top:394.76px;">¥4,730</div>
<div class="ab" style="left:223.70px;top:398.50px;width:2.60px;height:1.10px;background:#4a4a4a"></div>
<div class="ab" style="left:287.70px;top:398.50px;width:2.60px;height:1.10px;background:#4a4a4a"></div>
<div class="ab" style="left:351.70px;top:398.50px;width:2.60px;height:1.10px;background:#4a4a4a"></div>
<div class="ab" style="left:415.70px;top:398.50px;width:2.60px;height:1.10px;background:#4a4a4a"></div>
<div class="ab" style="left:478.70px;top:398.50px;width:2.60px;height:1.10px;background:#4a4a4a"></div>
<div class="ab" style="left:542.70px;top:398.50px;width:2.60px;height:1.10px;background:#4a4a4a"></div>
<div class="ab" style="left:606.70px;top:398.50px;width:2.60px;height:1.10px;background:#4a4a4a"></div>
<div class="ab" style="left:670.70px;top:398.50px;width:2.60px;height:1.10px;background:#4a4a4a"></div>
<div class="ab" style="left:733.70px;top:398.50px;width:2.60px;height:1.10px;background:#4a4a4a"></div>
<div id="e80" class="lnk" style="right:98.77px;top:394.66px;">¥4,730</div>
<div class="ab" style="left:861.70px;top:398.50px;width:2.60px;height:1.10px;background:#4a4a4a"></div>
<div id="e81" class="t" style="left:35.70px;top:414.68px;font-size:8px;color:#262626;-webkit-text-stroke:0.2px #262626">大宮</div>
</div>
<div class="ab" style="left:923.80px;top:139.50px;width:9.20px;height:280.50px;background:#ebebeb"></div>
<div class="ab" style="left:924px;top:139.5px;width:9px;height:9px;background:#efefef"></div>
<div class="tri" style="left:926.2px;top:143.6px;border-left:2.5px solid transparent;border-right:2.5px solid transparent;border-bottom:2.3px solid #18278c"></div>
<div class="ab" style="left:924.6px;top:149px;width:7.8px;height:48.6px;background:#18278c"></div>
<div class="ab" style="left:924px;top:411px;width:9px;height:9px;background:#fafafa"></div>
<div class="tri" style="left:926.2px;top:413px;border-left:2.5px solid transparent;border-right:2.5px solid transparent;border-top:2.6px solid #18278c"></div>
</body></html>
